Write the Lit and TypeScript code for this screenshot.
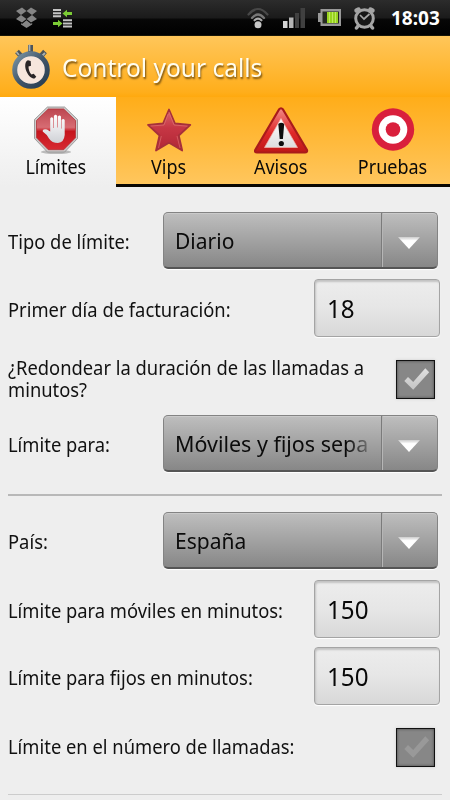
import { LitElement, html, svg, css } from "lit";
import { customElement, property } from "lit/decorators.js";

@customElement("status-bar")
class StatusBar extends LitElement {
  static styles = css`
    :host { display: flex; align-items: center; height: 36px; box-sizing: border-box; padding: 0 7px 0 15px;
      background: linear-gradient(#2c2c2c, #1b1b1b 50%, #070707 56%, #000); border-bottom: 1px solid #171507; }
    svg { display: block; flex: none; }
    .sync { margin-left: 14px; }
    .wifi { margin-left: auto; }
    .signal { margin-left: 14px; }
    .battery { margin-left: 13px; }
    .alarm { margin-left: 12px; }
    .clock { margin-left: 15px; width: 52px; white-space: nowrap; color: #fff; font: bold 19px/36px "Noto Sans", "Open Sans", sans-serif; }
  `;
  render() {
    return html`
      <svg width="23" height="22" viewBox="0 0 23 22" fill="#858585">
        <path d="M1 4 7 .5 11.5 4 6 8Z M11.5 4 16 .5 22 4 17 8Z M1 12 6 8 11.5 12 7 15.5Z M11.5 12 17 8 22 12 16 15.5Z M6 16.2 7.3 16.8 11.5 13.3 15.8 16.8 17.2 16 V17.4L11.5 21 6 17.4Z"/>
      </svg>
      <svg class="sync" width="21" height="20" viewBox="0 0 21 20">
        <path stroke="#c4c4c4" stroke-width="2" d="M1 2H9M1 5.2H9M1 8.3H9M11 12.3H20M11 15.5H20M11 18.6H20"/>
        <path fill="#7ccc35" d="M10.5 5.5 15 1.8V4.1H20V7H15V9.200Z M10.500 15.5 6 11.800V14.1H1V17H6V19.200Z"/>
      </svg>
      <svg class="wifi" width="22" height="24" viewBox="0 0 22 24" fill="none" stroke-linecap="round">
        <path stroke="#484848" stroke-width="2.2" d="M1.5 8.500Q11 -2.500 20.5 8.500"/>
        <path stroke="#777" stroke-width="2.3" d="M5 12Q11 5 17 12"/>
        <path stroke="#aaa" stroke-width="2.2" d="M7.6 14.3Q11 10.8 14.4 14.3"/>
        <circle cx="11" cy="18.800" r="3.5" fill="#c8c8c8"/>
      </svg>
      <svg class="signal" width="22" height="20" viewBox="0 0 22 20">
        <path fill="#d4d4d4" d="M0 13H4.500V20H0Z"/><path fill="#b4b4b4" d="M6 9.500H10.500V20H6Z"/>
        <path fill="#404040" d="M12 5H16V20H12Z M17.500 0H22V20H17.500Z"/>
      </svg>
      <svg class="battery" width="23" height="17" viewBox="0 0 23 17">
        <path fill="#999" d="M2.500 0H23V17H2.500V13H0V4H2.500Z"/>
        <path fill="#262b20" d="M4.500 2.500H21V14.500H4.500Z"/>
        <path fill="#99d51f" d="M9 3H20V14H9Z"/>
        <path stroke="#c9ee70" stroke-width=".8" d="M11.500 3V14M14.500 3V14M17.500 3V14"/>
      </svg>
      <svg class="alarm" width="23" height="24" viewBox="0 0 23 24" fill="none" stroke="#a5a5a5">
        <path stroke-width="4.500" stroke-linecap="round" d="M3.500 4.500 5.500 3.500M19.500 4.500 17.500 3.500"/>
        <path stroke-width="3.500" stroke-linecap="round" d="M5 20 3.500 22M18 20 19.500 22"/>
        <circle cx="11.500" cy="12.500" r="8.800" stroke-width="3" fill="#171717"/>
        <path stroke-width="1.700" d="M7 9 11 13 16.500 8"/>
      </svg>
      <div class="clock">18:03</div>`;
  }
}

@customElement("title-bar")
class TitleBar extends LitElement {
  static styles = css`
    :host { display: flex; align-items: center; height: 61px; padding-left: 11px; box-sizing: border-box;
      background: linear-gradient(#ffc65a, #ffae1b 92%, #ffa90e); }
    svg { flex: none; }
    .title { margin: 0 0 0 11px; color: #fffdf0; font: 25px/34px "Noto Sans", "Open Sans", sans-serif; white-space: nowrap;
      text-shadow: 1px 2px 2px #765010; transform: scaleX(.98); transform-origin: 0 50%; }
  `;
  render() {
    return html`
      <svg width="40" height="48" viewBox="0 0 40 48">
        <defs><linearGradient id="rim" x2="1" y2="1"><stop stop-color="#7b95a5"/><stop offset=".5" stop-color="#41566a"/><stop offset="1" stop-color="#263b4e"/></linearGradient></defs>
        <path stroke="#4e5558" stroke-width="5" d="M19.500 2V10M6 8.500 10 13M34 8.500 30 13"/>
        <path stroke="#aab0ae" stroke-width="1.800" d="M18.500 1.500V8M5.500 9 8 12M34 10 31.500 12.500"/>
        <circle cx="20" cy="27" r="16.300" fill="#f6e6dd" stroke="url(#rim)" stroke-width="5"/>
        <path fill="#292527" d="M17 17.200C13.800 18 13.500 24 15.500 28.500C17.500 33 20.800 35.800 23.500 35.600L25.300 33.800L22.700 30.800L20.500 31.600C18.600 29.700 17.500 26.700 17.500 23.600L20 22.700L19.700 18Z"/>
      </svg>
      <div class="title">Control your calls</div>`;
  }
}

const tabIcons: Record<string, unknown> = {
  stop: svg`
    <defs>
      <linearGradient id="red" x2="0" y2="1"><stop stop-color="#bd4650"/><stop offset=".45" stop-color="#d76c73"/><stop offset=".55" stop-color="#c5151d"/><stop offset="1" stop-color="#d72a32"/></linearGradient>
      <linearGradient id="hand" x2="0" y2="1"><stop stop-color="#fff"/><stop offset="1" stop-color="#cfd1d6"/></linearGradient>
    </defs>
    <ellipse cx="28" cy="48" rx="15" ry="2" fill="#bbb"/>
    <path fill="#ccc" stroke="#8e8a8a" stroke-width=".8" d="M19.400 3H36.600L49.500 15.500V34.500L36.600 48H19.400L6.500 34.500V15.500Z"/>
    <path fill="url(#red)" stroke="#b33238" stroke-width=".8" d="M20.300 5H35.700L47.500 16.500V33.800L35.700 45.700H20.300L8.500 33.800V16.500Z"/>
    <path fill="url(#hand)" d="M22.200 27.500V14.500Q23.800 12 25.200 14.500V24H25.900V12Q27.600 9.500 29.200 12V23.500H29.900V12.500Q31.500 10.500 33 12.500V24.500H33.600V16Q35.200 14 36.700 16V31Q36 38.500 30 39Q24 39 21 34.500Q18.500 30 14.700 27.500Q14.500 24.500 19 25.500Z"/>`,
  star: svg`
    <defs><linearGradient id="star" x2="0" y2="1"><stop stop-color="#dc686d"/><stop offset=".45" stop-color="#c63644"/><stop offset="1" stop-color="#b12736"/></linearGradient></defs>
    <path fill="url(#star)" stroke="#a6303a" stroke-width="1.800" stroke-linejoin="round" d="M28 5.500 34 19.500 49.300 20.800 37.800 31.500 41.200 46.500 28 38.800 15 46.500 18.500 31.500 7 20.800 22 19.500Z"/>
    <path fill="none" stroke="#e78382" stroke-width="1" opacity=".5" d="M28 8 33 21 46.500 22.200M9.500 22 23 21 27 10M20.300 32 17.500 44M36 32 39 44"/>`,
  warn: svg`
    <defs>
      <linearGradient id="tri" x2="0" y2="1"><stop stop-color="#f28b87"/><stop offset=".55" stop-color="#df2929"/><stop offset="1" stop-color="#be1818"/></linearGradient>
      <linearGradient id="pane" x2="0" y2="1"><stop stop-color="#fff"/><stop offset="1" stop-color="#ddd"/></linearGradient>
    </defs>
    <path fill="url(#tri)" stroke="#a91b1b" stroke-width="2.200" stroke-linejoin="round" d="M26 5.500Q28 3 30 5.500L54 46Q54.500 48.500 52 48.500H4Q1.500 48.500 2.200 46Z"/>
    <path fill="url(#pane)" stroke="#f5b4aa" stroke-width=".7" stroke-linejoin="round" d="M28 14.500 44.500 43.500H11.500Z"/>
    <path fill="#0d0d0d" d="M25.300 20Q28.200 17.500 31.200 20L29.900 35H26.700Z"/><circle cx="28.300" cy="39.500" r="2.600" fill="#0d0d0d"/>`,
  target: svg`
    <circle cx="28" cy="25.500" r="21.200" fill="#d91f3c"/><circle cx="28" cy="25.500" r="14.300" fill="#fff"/><circle cx="28" cy="25.500" r="7.300" fill="#d91f3c"/>`,
};

@customElement("tab-strip")
class TabStrip extends LitElement {
  static styles = css`
    :host { display: grid; grid-template-columns: 116px 105px 120px 109px; height: 90px; }
    .tab { display: flex; flex-direction: column; align-items: center; padding-top: 7px; box-sizing: border-box; height: 90px;
      background: linear-gradient(#ffad19, #ffc65d); border-bottom: 3px solid #0a0703; }
    .tab.active { background: linear-gradient(#fff, #eee); border: 0; padding-right: 4px; }
    svg { display: block; flex: none; width: 56px; height: 50px; }
    .tab.last { padding-right: 5px; }
    .name { font: 20px/24px "Noto Sans", "Open Sans", sans-serif; color: #090909; margin-top: 1px; transform: scaleX(.9); white-space: nowrap; }
  `;
  render() {
    const tabs = [["Límites", "stop", "active"], ["Vips", "star", ""], ["Avisos", "warn", ""], ["Pruebas", "target", "last"]];
    return tabs.map(([name, icon, state]) => html`
      <div class="tab ${state}"><svg viewBox="0 0 56 50">${tabIcons[icon]}</svg><div class="name">${name}</div></div>`);
  }
}

@customElement("drop-down")
class DropDown extends LitElement {
  @property() value = "";
  static styles = css`
    :host { display: flex; flex: none; width: 275px; height: 57px; box-sizing: border-box; margin-right: 12px;
      border: 1px solid #838383; border-bottom: 2px solid #555; border-radius: 5px;
      background: linear-gradient(#bebebe, #878787); box-shadow: inset 0 1px #cacaca, 0 1px 1px #fff; }
    .value { width: 217px; box-sizing: border-box; padding-left: 11px; }
    .text { display: inline-block; font: 22.5px/55px "Noto Sans", "Open Sans", sans-serif; color: #0b0b0b; white-space: nowrap; transform: scaleX(.935); transform-origin: 0 50%; }
    .long { transform: scaleX(.953); -webkit-mask-image: linear-gradient(90deg, #000 180px, rgba(0,0,0,.15) 208px); }
    .arrow { flex: 1; display: grid; place-items: center; border-left: 1px solid #7b7b7b; box-shadow: inset 1px 0 #b6b6b6; padding: 5px 2px 0 0; }
  `;
  render() {
    return html`
      <div class="value"><span class="text ${this.value.length > 12 ? "long" : ""}">${this.value}</span></div>
      <div class="arrow"><svg width="22" height="12" viewBox="0 0 22 12"><defs><linearGradient id="a" x2="0" y2="1"><stop stop-color="#ccc"/><stop offset=".3" stop-color="#fff"/></linearGradient></defs><path fill="url(#a)" d="M0 0H22L11 12Z"/></svg></div>`;
  }
}

@customElement("number-field")
class NumberField extends LitElement {
  @property() value = "";
  static styles = css`
    :host { display: block; flex: none; width: 126px; height: 58px; box-sizing: border-box; margin-right: 10px; padding-left: 12px;
      border: 1px solid #a4a4a4; border-radius: 4px; background: linear-gradient(#ededed, #e6e6e6 50%, #d8d8d8);
      box-shadow: inset 1px 2px 2px #c2c2c2, 0 1px 1px #fff; }
    .text { display: inline-block; font: 26px/56px "Noto Sans", "Open Sans", sans-serif; color: #080808; transform: scaleX(.93); transform-origin: 0 50%; }
  `;
  render() { return html`<span class="text">${this.value}</span>`; }
}

@customElement("check-box")
class CheckBox extends LitElement {
  @property({ type: Boolean }) checked = false;
  static styles = css`
    :host { display: block; flex: none; width: 39px; height: 39px; box-sizing: border-box; margin-right: 15px;
      border: 1px solid #111; background: #878787; box-shadow: inset 0 0 3px #444, 0 0 3px #ccc; }
    svg { display: block; }
  `;
  render() {
    return html`<svg width="37" height="37" viewBox="0 0 37 37"><defs><linearGradient id="c" x2="0" y2="1"><stop stop-color="#e0e0e0"/><stop offset="1" stop-color="#c4c4c4"/></linearGradient></defs>
      <path fill="${this.checked ? "url(#c)" : "#999"}" d="M7.300 20 11 16 16.200 21 28.300 7.300 32.200 11.300 16.200 28.800Z"/></svg>`;
  }
}

@customElement("app-root")
class AppRoot extends LitElement {
  static styles = css`
    :host { display: flex; flex-direction: column; height: 800px; width: 450px; overflow: hidden; background: #eee; }
    .form { display: flex; flex-direction: column; padding: 25px 0 0 8px; }
    .row { display: flex; align-items: center; justify-content: space-between; }
    .drop { height: 57px; }
    .num { height: 58px; }
    .check { height: 39px; }
    .label { font: 19px/22px "Noto Sans", "Open Sans", sans-serif; color: #111; white-space: pre; transform: scaleX(.966); transform-origin: 0 50%; margin-top: 4px; width: 0; }
    .drop .label { margin-top: 2px; }
    .check .label { margin: 0 0 2px; }
    .g9 { margin-top: 9px; } .g10 { margin-top: 10px; } .g11 { margin-top: 11px; }
    .g16 { margin-top: 16px; } .g23 { margin-top: 23px; }
    .rule { height: 2px; background: #b8b8b8; margin: 22px 8px 0 0; }
    .faint { height: 1px; background: #ccc; margin-top: 27px; }
  `;
  render() {
    return html`
      <status-bar></status-bar>
      <title-bar></title-bar>
      <tab-strip></tab-strip>
      <div class="form">
        <div class="row drop"><div class="label">Tipo de límite:</div><drop-down value="Diario"></drop-down></div>
        <div class="row num g10"><div class="label">Primer día de facturación:</div><number-field value="18"></number-field></div>
        <div class="row check g23"><div class="label">¿Redondear la duración de las llamadas a<br>minutos?</div><check-box checked></check-box></div>
        <div class="row drop g16"><div class="label">Límite para:</div><drop-down value="Móviles y fijos sepa"></drop-down></div>
        <div class="rule"></div>
        <div class="row drop g16"><div class="label">País:</div><drop-down value="España"></drop-down></div>
        <div class="row num g11"><div class="label">Límite para móviles en minutos:</div><number-field value="150"></number-field></div>
        <div class="row num g9"><div class="label">Límite para fijos en minutos:</div><number-field value="150"></number-field></div>
        <div class="row check g23"><div class="label">Límite en el número de llamadas:</div><check-box></check-box></div>
        <div class="rule faint"></div>
      </div>`;
  }
}
